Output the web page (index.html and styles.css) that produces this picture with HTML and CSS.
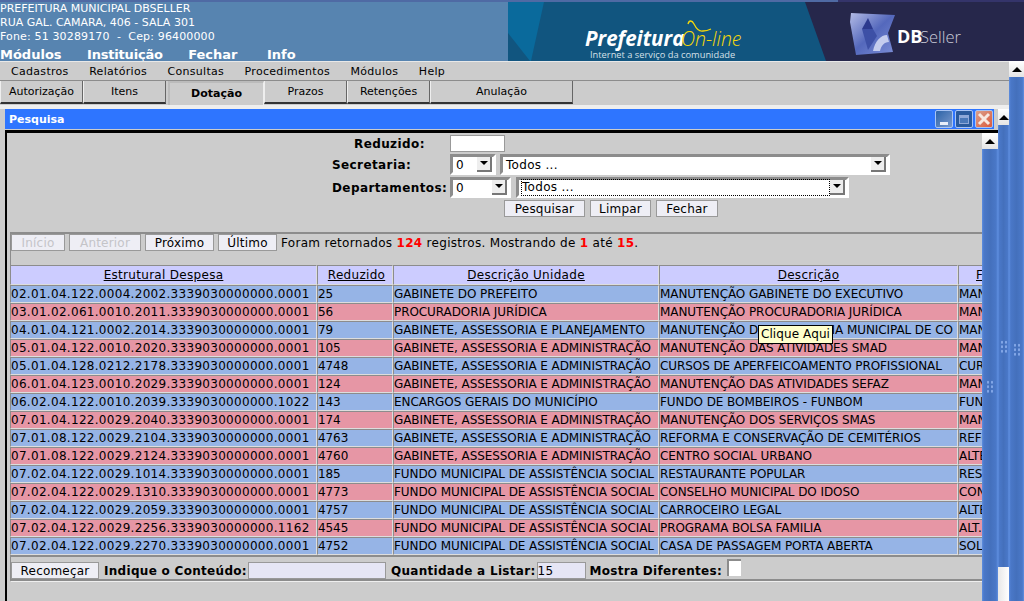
FILE: index.html
```html
<!DOCTYPE html>
<html lang="pt-BR">
<head>
  <meta charset="UTF-8" />
  <title>Prefeitura On-line</title>
  <link rel="stylesheet" href="styles.css">
</head>
<body>

  <!-- Top banner -->
  <header class="header">
    <div class="header-info">
      <div class="address">
        <div>PREFEITURA MUNICIPAL DBSELLER</div>
        <div>RUA GAL. CAMARA, 406 - SALA 301</div>
        <div class="phone">Fone: 51 30289170 &nbsp;-&nbsp; Cep: 96400000</div>
      </div>
      <nav class="main-nav">
        <span>Módulos</span>
        <span class="nav-instituicao">Instituição</span>
        <span>Fechar</span>
        <span>Info</span>
      </nav>
    </div>
    <svg class="banner" viewBox="508 2 516 59">
      <defs>
        <linearGradient id="cube" x1="0" y1="0" x2="1" y2="1">
          <stop offset="0" stop-color="#b4bce6" />
          <stop offset="0.5" stop-color="#5468bc" />
          <stop offset="1" stop-color="#7d8fd6" />
        </linearGradient>
      </defs>
      <rect x="508" y="2" width="516" height="59" fill="#11557f" />
      <polygon points="508,2 544,2 531,61 530,61 508,33" fill="#0a6a9c" />
      <polygon points="805,2 1024,2 1024,61 826,61" fill="#26274b" />
      <text x="585" y="46" class="logo-pref">Prefeitura</text>
      <text x="681" y="46" class="logo-online">On-line</text>
      <path d="M688 24 C689 20 692 20 694 24 C696 28 699 32 703 31 C706 31 709 30 711 29" class="logo-swoosh" />
      <text x="590" y="57.5" class="logo-sub">Internet a serviço da comunidade</text>
      <polygon points="851,13 895,15 888,33 893,52 856,55 850,22" fill="url(#cube)" />
      <polygon points="868,18 873,29 862,29" fill="#2c3a8e" />
      <polygon points="862,29 873,29 877,36 868,50" fill="#3d50a6" />
      <path d="M873 51 C875 41 881 35 887 35 L889 42 C884 42 881 46 880 51 Z" fill="#c5cdee" />
      <text x="897" y="43" class="logo-db">DB</text>
      <text x="920" y="43" class="logo-seller">Seller</text>
    </svg>
  </header>

  <div class="workspace">
    <main class="main">
      <div class="menubar">
        <span>Cadastros</span>
        <span>Relatórios</span>
        <span>Consultas</span>
        <span>Procedimentos</span>
        <span>Módulos</span>
        <span>Help</span>
      </div>

      <div class="tabs">
        <div class="tab tab-autorizacao">Autorização</div>
        <div class="tab tab-itens">Itens</div>
        <div class="tab tab-active">Dotação</div>
        <div class="tab tab-prazos">Prazos</div>
        <div class="tab tab-retencoes">Retenções</div>
        <div class="tab tab-anulacao">Anulação</div>
      </div>

      <!-- Search window -->
      <section class="window">
        <div class="window-body">
          <div class="titlebar">
            <span class="title">Pesquisa</span>
            <div class="win-btn win-min"><i></i></div>
            <div class="win-btn win-max"><i></i></div>
            <div class="win-btn win-close">
              <svg width="14" height="14" viewBox="0 0 14 14"><path d="M2 2 L12 12 M12 2 L2 12" /></svg>
            </div>
          </div>

          <div class="panel">
            <div class="panel-content">
              <form class="search-form">
                <label class="label-reduzido">Reduzido:</label>
                <div class="controls"><input type="text" class="input-reduzido" /></div>

                <label>Secretaria:</label>
                <div class="controls">
                  <div class="select select-code"><span>0</span><b></b></div>
                  <div class="select select-secretaria"><span>Todos ...</span><b></b></div>
                </div>

                <label>Departamentos:</label>
                <div class="controls">
                  <div class="select select-code-wide"><span>0</span><b></b></div>
                  <div class="select select-depto"><span class="focused">Todos ...</span><b></b></div>
                </div>

                <div class="form-buttons">
                  <button type="button" class="btn btn-pesquisar">Pesquisar</button>
                  <button type="button" class="btn btn-limpar">Limpar</button>
                  <button type="button" class="btn btn-fechar">Fechar</button>
                </div>
              </form>

              <div class="results">
                <div class="pager">
                  <button type="button" class="btn btn-inicio" disabled>Início</button>
                  <button type="button" class="btn btn-anterior" disabled>Anterior</button>
                  <button type="button" class="btn btn-proximo">Próximo</button>
                  <button type="button" class="btn btn-ultimo">Último</button>
                  <span class="pager-text">Foram retornados <b>124</b> registros. Mostrando de <b>1</b> até <b>15</b>.</span>
                </div>

                <table class="grid">
                  <colgroup>
                    <col class="col-estrutural" />
                    <col class="col-reduzido" />
                    <col class="col-unidade" />
                    <col class="col-descricao" />
                    <col class="col-extra" />
                  </colgroup>
                  <thead>
                    <tr>
                      <th>Estrutural Despesa</th>
                      <th>Reduzido</th>
                      <th>Descrição Unidade</th>
                      <th>Descrição</th>
                      <th>Finalidade</th>
                    </tr>
                  </thead>
                  <tbody>
                    <tr class="blue"><td>02.01.04.122.0004.2002.3339030000000.0001</td><td>25</td><td>GABINETE DO PREFEITO</td><td>MANUTENÇÃO GABINETE DO EXECUTIVO</td><td>MANUTENÇÃO</td></tr>
                    <tr class="pink"><td>03.01.02.061.0010.2011.3339030000000.0001</td><td>56</td><td>PROCURADORIA JURÍDICA</td><td>MANUTENÇÃO PROCURADORIA JURÍDICA</td><td>MANUTENÇÃO</td></tr>
                    <tr class="blue"><td>04.01.04.121.0002.2014.3339030000000.0001</td><td>79</td><td>GABINETE, ASSESSORIA E PLANEJAMENTO</td><td>MANUTENÇÃO DA SECRETARIA MUNICIPAL DE CO</td><td>MANUTENÇÃO</td></tr>
                    <tr class="pink"><td>05.01.04.122.0010.2020.3339030000000.0001</td><td>105</td><td>GABINETE, ASSESSORIA E ADMINISTRAÇÃO</td><td>MANUTENÇÃO DAS ATIVIDADES SMAD</td><td>MANUTENÇÃO</td></tr>
                    <tr class="blue"><td>05.01.04.128.0212.2178.3339030000000.0001</td><td>4748</td><td>GABINETE, ASSESSORIA E ADMINISTRAÇÃO</td><td>CURSOS DE APERFEICOAMENTO PROFISSIONAL</td><td>CURSOS</td></tr>
                    <tr class="pink"><td>06.01.04.123.0010.2029.3339030000000.0001</td><td>124</td><td>GABINETE, ASSESSORIA E ADMINISTRAÇÃO</td><td>MANUTENÇÃO DAS ATIVIDADES SEFAZ</td><td>MANUTENÇÃO</td></tr>
                    <tr class="blue"><td>06.02.04.122.0010.2039.3339030000000.1022</td><td>143</td><td>ENCARGOS GERAIS DO MUNICÍPIO</td><td>FUNDO DE BOMBEIROS - FUNBOM</td><td>FUNDO</td></tr>
                    <tr class="pink"><td>07.01.04.122.0029.2040.3339030000000.0001</td><td>174</td><td>GABINETE, ASSESSORIA E ADMINISTRAÇÃO</td><td>MANUTENÇÃO DOS SERVIÇOS SMAS</td><td>MANUTENÇÃO</td></tr>
                    <tr class="blue"><td>07.01.08.122.0029.2104.3339030000000.0001</td><td>4763</td><td>GABINETE, ASSESSORIA E ADMINISTRAÇÃO</td><td>REFORMA E CONSERVAÇÃO DE CEMITÉRIOS</td><td>REFORMA</td></tr>
                    <tr class="pink"><td>07.01.08.122.0029.2124.3339030000000.0001</td><td>4760</td><td>GABINETE, ASSESSORIA E ADMINISTRAÇÃO</td><td>CENTRO SOCIAL URBANO</td><td>ALTERAÇÃO</td></tr>
                    <tr class="blue"><td>07.02.04.122.0029.1014.3339030000000.0001</td><td>185</td><td>FUNDO MUNICIPAL DE ASSISTÊNCIA SOCIAL</td><td>RESTAURANTE POPULAR</td><td>RESTAURANTE</td></tr>
                    <tr class="pink"><td>07.02.04.122.0029.1310.3339030000000.0001</td><td>4773</td><td>FUNDO MUNICIPAL DE ASSISTÊNCIA SOCIAL</td><td>CONSELHO MUNICIPAL DO IDOSO</td><td>CONSELHO</td></tr>
                    <tr class="blue"><td>07.02.04.122.0029.2059.3339030000000.0001</td><td>4757</td><td>FUNDO MUNICIPAL DE ASSISTÊNCIA SOCIAL</td><td>CARROCEIRO LEGAL</td><td>ALTERAÇÃO</td></tr>
                    <tr class="pink"><td>07.02.04.122.0029.2256.3339030000000.1162</td><td>4545</td><td>FUNDO MUNICIPAL DE ASSISTÊNCIA SOCIAL</td><td>PROGRAMA BOLSA FAMILIA</td><td>ALT. BOLSA</td></tr>
                    <tr class="blue"><td>07.02.04.122.0029.2270.3339030000000.0001</td><td>4752</td><td>FUNDO MUNICIPAL DE ASSISTÊNCIA SOCIAL</td><td>CASA DE PASSAGEM PORTA ABERTA</td><td>SOLIDARIEDADE</td></tr>
                  </tbody>
                </table>

                <div class="filter-bar">
                  <button type="button" class="btn btn-recomecar">Recomeçar</button>
                  <label>Indique o Conteúdo:</label>
                  <input type="text" class="filter-input input-conteudo" />
                  <label>Quantidade a Listar:</label>
                  <input type="text" class="filter-input input-qtd" value="15" />
                  <label>Mostra Diferentes:</label>
                  <span class="checkbox"></span>
                </div>
              </div>
            </div>

            <div class="scrollbar scroll-inner">
              <div class="scroll-btn"><i></i></div>
              <div class="scroll-thumb thumb-inner"><span class="grip"></span></div>
            </div>
          </div>
        </div>

        <div class="scrollbar scroll-mid">
          <div class="scroll-btn"><i></i></div>
          <div class="scroll-thumb thumb-mid"><span class="grip"></span></div>
          <div class="scroll-track"></div>
        </div>
      </section>
    </main>

    <div class="scrollbar scroll-outer">
      <div class="scroll-btn"><i></i></div>
      <div class="scroll-thumb thumb-outer"><span class="grip"></span></div>
    </div>
  </div>

  <div class="tooltip">Clique Aqui</div>

</body>
</html>
```

FILE: styles.css
```css
* {
  margin: 0;
  padding: 0;
  box-sizing: border-box;
}

html, body {
  width: 1024px;
  height: 601px;
  overflow: hidden;
}

body {
  position: relative;
  background: #cccccc;
  color: #000;
  font-family: "DejaVu Sans", sans-serif;
  font-size: 12px;
  letter-spacing: 0.3px;
}

/* header */
.header {
  display: flex;
  height: 61px;
  overflow: hidden;
  background: #5784b0;
  border-top: 2px solid;
  border-image: linear-gradient(90deg, #4f6aa4 837px, #34346a 837px) 2;
  letter-spacing: 0;
}

.header-info {
  flex: 1;
  color: #fff;
}

.address {
  height: 45px;
  font-size: 11px;
  line-height: 14px;
  white-space: nowrap;
}

.phone {
  letter-spacing: 0.15px;
}

.main-nav {
  display: flex;
  gap: 25.5px;
  font-size: 13px;
  font-weight: bold;
  line-height: 16px;
}

.nav-instituicao {
  letter-spacing: -0.2px;
}

.main-nav span:last-child {
  margin-left: 4px;
}

.banner {
  display: block;
  width: 516px;
  height: 59px;
  flex: none;
}

.logo-pref {
  font-family: "Open Sans", sans-serif;
  font-size: 20.5px;
  font-weight: 700;
  font-style: italic;
  fill: #fff;
}

.logo-online {
  font-family: "Open Sans", sans-serif;
  font-size: 19.5px;
  font-style: italic;
  font-weight: 300;
  fill: #f6d80a;
}

.logo-swoosh {
  fill: none;
  stroke: #f6d80a;
  stroke-width: 1.3;
}

.logo-sub {
  font-family: "Open Sans", sans-serif;
  font-size: 9.3px;
  fill: #d5e0e8;
}

.logo-db {
  font-family: "Open Sans", sans-serif;
  font-size: 18px;
  font-weight: 700;
  fill: #fff;
}

.logo-seller {
  font-family: "Open Sans", sans-serif;
  font-size: 16.5px;
  font-weight: 300;
  fill: #c9cbd8;
}

/* page body */
.workspace {
  display: flex;
  height: 540px;
}

.main {
  flex: 1;
  min-width: 0;
}

.menubar {
  display: flex;
  gap: 20.5px;
  height: 20px;
  padding-left: 11px;
  line-height: 20px;
  font-size: 11px;
  letter-spacing: 0.3px;
  border-top: 1px solid #e8e8e8;
  border-bottom: 1px solid #8c8c8c;
}

.tabs {
  display: flex;
  height: 24px;
  font-size: 11px;
  letter-spacing: 0;
}

.tab {
  height: 23px;
  line-height: 21px;
  text-align: center;
  background: #cccccc;
  border-left: 1px solid #eeeeee;
  border-right: 1px solid #666;
  border-bottom: 2px solid #333;
}

.tab-autorizacao { width: 83px; }
.tab-itens { width: 83px; }
.tab-prazos { width: 83px; }
.tab-retencoes { width: 83px; }
.tab-anulacao { width: 143px; }

.tab-active {
  width: 96px;
  height: 24px;
  margin-left: 2px;
  line-height: 22px;
  font-weight: bold;
  border-left: 2px solid #bbbbbb;
  border-top: 2px solid #bbbbbb;
  border-right: 1px solid #eeeeee;
  border-bottom: none;
}

/* window */
.window {
  display: flex;
  height: 496px;
  background: #cccccc;
  border-top: 4px solid #eeeeee;
}

.window-body {
  flex: 1;
  min-width: 0;
  padding-left: 5px;
  overflow: hidden;
}

.titlebar {
  display: flex;
  align-items: center;
  gap: 2px;
  height: 20px;
  margin-right: 4px;
  padding-right: 1px;
  background: #2e75ff;
}

.title {
  flex: 1;
  padding-left: 4px;
  color: #fff;
  font-size: 11px;
  font-weight: bold;
  letter-spacing: 0;
}

.win-btn {
  display: flex;
  align-items: center;
  justify-content: center;
  width: 18px;
  height: 18px;
  border: 1px solid #a8c4f4;
  border-radius: 2px;
}

.win-min {
  align-items: flex-end;
  padding-bottom: 2px;
  background: linear-gradient(135deg, #2c63a8, #7a99cc);
}

.win-min i {
  width: 8px;
  height: 3px;
  background: #e8eefa;
}

.win-max {
  background: #2a5a9c;
}

.win-max i {
  width: 10px;
  height: 9px;
  border: 1px solid #8ea8d8;
  border-top-width: 3px;
  background: #4a78b8;
}

.win-close {
  background: linear-gradient(135deg, #d8a08c, #dd5a3c);
}

.win-close svg path {
  fill: none;
  stroke: #f8e8e0;
  stroke-width: 3;
}

.panel {
  display: flex;
  height: 472px;
  margin-top: 1px;
  border-top: 3px solid #000;
  border-left: 2px solid #000;
}

.panel-content {
  flex: 1;
  min-width: 0;
  overflow: hidden;
}

/* search form */
.search-form {
  display: grid;
  grid-template-columns: 118px 440px;
  grid-auto-rows: min-content;
  row-gap: 2px;
  width: 558px;
  height: 99px;
  margin-left: 325px;
  padding-top: 2px;
}

.search-form label {
  align-self: center;
  font-weight: bold;
  letter-spacing: 0.4px;
  white-space: nowrap;
}

.search-form .label-reduzido {
  padding-left: 22px;
}

.controls {
  display: flex;
  gap: 4px;
}

input {
  display: block;
  font-family: inherit;
  font-size: 12px;
  letter-spacing: inherit;
  border: 1px solid #999;
  background: #fff;
  outline: none;
}

.input-reduzido {
  width: 55px;
  height: 17px;
}

.select {
  display: flex;
  align-items: center;
  justify-content: space-between;
  height: 21px;
  padding: 0 1px 0 3px;
  background: #fff;
  border: 3px solid #8c8c8c;
  border-right-color: #fff;
  border-bottom-color: #fff;
}

.select b {
  display: block;
  position: relative;
  width: 15px;
  height: 15px;
  background: #eeeeee;
  border-right: 2px solid #777;
  border-bottom: 2px solid #777;
}

.select b::after {
  content: "";
  position: absolute;
  left: 3px;
  top: 4px;
  border-style: solid;
  border-width: 4px 4px 0 4px;
  border-color: #000 transparent transparent transparent;
}

.select-code { width: 46px; }
.select-secretaria { width: 390px; }
.select-code-wide { width: 61px; }
.select-depto { width: 333px; margin-left: 1px; }

.select .focused {
  flex: 1;
  outline: 1px dotted #000;
  margin-right: 1px;
  line-height: 15px;
}

.form-buttons {
  grid-column: 1 / 3;
  display: flex;
  justify-content: center;
  gap: 5px;
}

.btn {
  display: block;
  height: 17px;
  padding-top: 1px;
  font-family: inherit;
  font-size: 12px;
  line-height: 15px;
  letter-spacing: 0.2px;
  color: #000;
  background: #eeeef5;
  border: 1px solid #999;
}

.btn:disabled {
  color: #c4c4c8;
}

.btn-pesquisar { width: 81px; }
.btn-limpar { width: 61px; }
.btn-fechar { width: 62px; }

/* results */
.results {
  margin-left: 3px;
  border-top: 2px solid #8c8c8c;
  border-left: 1px solid #8c8c8c;
}

.pager {
  display: flex;
  align-items: center;
  height: 31px;
  padding-bottom: 14px;
}

.btn-inicio { width: 54px; }
.btn-anterior { width: 72px; margin-left: 4px; }
.btn-proximo { width: 69px; margin-left: 4px; }
.btn-ultimo { width: 59px; margin-left: 4px; }

.pager-text {
  margin-left: 4px;
  white-space: nowrap;
}

.pager-text b {
  color: #f00;
}

.grid {
  width: 848px;
  margin-left: -1px;
  table-layout: fixed;
  border-collapse: separate;
  border-spacing: 0;
  white-space: nowrap;
}

.col-estrutural { width: 307px; }
.col-reduzido { width: 76px; }
.col-unidade { width: 266px; }
.col-descricao { width: 299px; }
.col-extra { width: 100px; }

.grid th,
.grid td {
  overflow: hidden;
  font-weight: normal;
  border-style: solid;
  border-width: 1px;
  border-color: #8c8c8c #dddddd #dddddd #8c8c8c;
}

.grid td {
  height: 18px;
  padding: 0;
  letter-spacing: -0.08px;
}

.grid td:first-child {
  letter-spacing: 0.3px;
}

.grid th {
  height: 20px;
  text-align: center;
  text-decoration: underline;
  background: #ccccff;
}

.grid th:nth-child(2) {
  padding-left: 3px;
}

.blue td { background: #96b4e6; }
.pink td { background: #e696a5; }

.filter-bar {
  display: flex;
  align-items: flex-start;
  height: 26px;
  padding-top: 5px;
  border-top: 2px solid #8c8c8c;
  border-bottom: 2px solid #8c8c8c;
  box-shadow: 0 1px 0 #eeeeee;
}

.filter-bar label {
  padding-top: 1px;
  font-weight: bold;
  line-height: 17px;
  white-space: nowrap;
}

.btn-recomecar { width: 88px; margin-right: 5px; }

.filter-input {
  height: 17px;
  background: #e6e6f5;
}

.input-conteudo { width: 138px; margin: 0 5px 0 1px; }
.input-qtd { width: 49px; margin: 0 4px 0 1px; }

.checkbox {
  display: block;
  width: 14px;
  height: 17px;
  margin: -3px 0 0 5px;
  background: #fff;
  border-top: 2px solid #8c8c8c;
  border-left: 2px solid #8c8c8c;
}

/* scrollbars */
.scrollbar {
  flex: none;
  overflow: hidden;
  background: #cccccc;
}

.scroll-btn {
  display: flex;
  align-items: center;
  justify-content: center;
  height: 16px;
  background: linear-gradient(#ffffff, #e4e4e4);
}

.scroll-btn i {
  border-style: solid;
  border-width: 0 5px 5px 5px;
  border-color: transparent transparent #000 transparent;
}

.scroll-thumb {
  display: flex;
  align-items: center;
  justify-content: center;
  background: linear-gradient(90deg, #5f8fe0 0, #4a78c8 12%, #4470bc 50%, #4a78c8 88%, #5f8fe0 100%);
}

.grip {
  display: block;
  width: 8px;
  height: 13px;
  background-image: radial-gradient(circle, #84a8e8 1px, transparent 1.2px);
  background-size: 4px 4.5px;
}

.scroll-outer { width: 15px; }
.scroll-mid { width: 11px; }
.scroll-inner { width: 16px; }

.thumb-outer { height: 544px; }
.thumb-mid { height: 442px; }
.thumb-inner { height: 474px; }

.scroll-track {
  height: 60px;
  background: linear-gradient(90deg, #e8e8e8, #ffffff);
}

.tooltip {
  position: absolute;
  left: 758px;
  top: 325px;
  width: 75px;
  height: 19px;
  line-height: 17px;
  letter-spacing: 0.1px;
  text-align: center;
  background: #ffffcc;
  border: 1px solid #000;
}
```
